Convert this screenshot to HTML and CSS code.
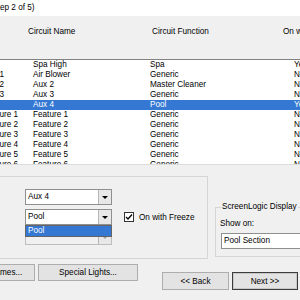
FILE: index.html
```html
<!DOCTYPE html>
<html>
<head>
<meta charset="utf-8">
<link rel="stylesheet" href="styles.css">
</head>
<body>
<div class="page">
  <div class="title"><span class="title-text">(Step 2 of 5)</span></div>
  <div class="colhead">
    <span class="h h-name">Circuit Name</span>
    <span class="h h-func">Circuit Function</span>
    <span class="h h-freeze">On with Freeze</span>
  </div>
  <div class="list">
    <div class="row"><span>Spa</span><span>Spa High</span><span>Spa</span><span>Yes</span></div>
    <div class="row"><span>Aux 1</span><span>Air Blower</span><span>Generic</span><span>No</span></div>
    <div class="row"><span>Aux 2</span><span>Aux 2</span><span>Master Cleaner</span><span>No</span></div>
    <div class="row"><span>Aux 3</span><span>Aux 3</span><span>Generic</span><span>No</span></div>
    <div class="row selected"><span></span><span>Aux 4</span><span>Pool</span><span>Yes</span></div>
    <div class="row"><span>Feature 1</span><span>Feature 1</span><span>Generic</span><span>No</span></div>
    <div class="row"><span>Feature 2</span><span>Feature 2</span><span>Generic</span><span>No</span></div>
    <div class="row"><span>Feature 3</span><span>Feature 3</span><span>Generic</span><span>No</span></div>
    <div class="row"><span>Feature 4</span><span>Feature 4</span><span>Generic</span><span>No</span></div>
    <div class="row"><span>Feature 5</span><span>Feature 5</span><span>Generic</span><span>No</span></div>
    <div class="row"><span>Feature 6</span><span>Feature 6</span><span>Generic</span><span>No</span></div>
  </div>
  <div class="lower">
    <div class="group-left">
      <div class="combo"><span class="combo-text">Aux 4</span><span class="combo-btn"><i class="tri"></i></span></div>
      <div class="combo-row">
        <div class="combo-wrap">
          <div class="combo"><span class="combo-text">Pool</span><span class="combo-btn"><i class="tri"></i></span></div>
          <div class="droplist"><div class="drop-item">Pool</div></div>
        </div>
        <span class="check"><svg width="8" height="8" viewBox="0 0 8 8"><path d="M1 4 L3 6 L7 1.5" fill="none" stroke="#000" stroke-width="1.3"/></svg></span>
        <span class="check-label">On with Freeze</span>
      </div>
      <div class="combo disabled"><span class="combo-text"></span><span class="combo-btn"><i class="tri"></i></span></div>
    </div>
    <fieldset class="group-right">
      <legend>ScreenLogic Display</legend>
      <div class="showon">Show on:</div>
      <div class="combo wide"><span class="combo-text">Pool Section</span><span class="combo-btn"><i class="tri"></i></span></div>
    </fieldset>
  </div>
  <div class="buttons">
    <button class="btn btn-names">Edit Circuit Names...</button>
    <button class="btn btn-special">Special Lights...</button>
    <button class="btn btn-back">&lt;&lt; Back</button>
    <button class="btn btn-next">Next &gt;&gt;</button>
  </div>
</div>
</body>
</html>
```
FILE: styles.css
```css
* { box-sizing: border-box; }
html, body { margin: 0; padding: 0; }
body {
  font-family: "Liberation Sans", Arial, sans-serif;
  font-size: 8.2px;
  color: #000;
  background: #f0f0f0;
}
.page {
  width: 300px;
  height: 300px;
  overflow: hidden;
  display: flex;
  flex-direction: column;
}
.title {
  height: 16px;
  flex: none;
  background: #fff;
  line-height: 15px;
  white-space: nowrap;
}
.title-text { display: inline-block; margin-left: -10.5px; }
.colhead {
  height: 44px;
  flex: none;
  background: #f0f0f0;
  border-bottom: 1px solid #828282;
  display: flex;
  padding: 11px 0 0 28px;
  line-height: 10px;
  white-space: nowrap;
}
.h-name { width: 124px; flex: none; }
.h-func { width: 131px; flex: none; }
.list {
  flex: none;
  margin-left: -20px;
  width: 340px;
  height: 105px;
  background: #fff;
  border-bottom: 1px solid #dcdcdc;
  overflow: hidden;
}
.row {
  display: grid;
  grid-template-columns: 50px 117px 144px 1fr;
  height: 10px;
  line-height: 10px;
  white-space: nowrap;
}
.row span { padding-left: 3px; overflow: hidden; }
.row.selected { background: #3478d4; color: #fff; }

.lower {
  flex: none;
  display: flex;
  align-items: flex-start;
  margin-top: 11px;
  margin-left: -10px;
}
.group-left {
  flex: none;
  width: 218px;
  height: 83px;
  border: 1px solid #d5d5d5;
  padding: 12px 0 0 34px;
}
.combo {
  width: 87px;
  height: 16px;
  border: 1px solid #8f8f8f;
  background: #fff;
  display: flex;
  align-items: stretch;
  line-height: 14px;
}
.combo-text { flex: 1; padding-left: 2px; white-space: nowrap; overflow: hidden; }
.combo-btn {
  width: 13px;
  flex: none;
  background: #e8e8e8;
  border-left: 1px solid #b5b5b5;
  display: flex;
  align-items: center;
  justify-content: center;
}
.tri {
  width: 0; height: 0;
  border-left: 3px solid transparent;
  border-right: 3px solid transparent;
  border-top: 3px solid #000;
}
.combo.disabled { background: #f0f0f0; border-color: #bdbdbd; margin-top: 4px; }
.combo.disabled .tri { border-top-color: #a0a0a0; }
.combo-row {
  display: flex;
  align-items: center;
  margin-top: 4px;
}
.combo-wrap { position: relative; flex: none; }
.droplist {
  position: absolute;
  left: 0;
  top: 16px;
  width: 87px;
  height: 12px;
  border: 1px solid #646464;
  background: #fff;
  z-index: 2;
}
.drop-item {
  background: #3478d4;
  color: #fff;
  height: 10px;
  line-height: 10px;
  padding-left: 2px;
}
.check {
  width: 10px;
  height: 10px;
  margin-left: 12px;
  border: 1px solid #333;
  background: #fff;
  display: flex;
  align-items: center;
  justify-content: center;
  flex: none;
}
.check-label { margin-left: 5px; white-space: nowrap; }

.group-right {
  flex: none;
  margin: 26px 0 0 7px;
  width: 100px;
  border: 1px solid #d5d5d5;
  padding: 0 5px 7px 5px;
  min-width: 0;
}
.group-right legend {
  padding: 0 1px;
  line-height: 10px;
  white-space: nowrap;
}
.showon { margin: 7px 0 0 -1px; line-height: 10px; }
.combo.wide { width: 120px; margin-top: 4px; }

.buttons {
  flex: none;
  display: flex;
  align-items: flex-start;
  margin-left: -65px;
}
.btn {
  font: inherit;
  color: #000;
  background: #e3e3e3;
  border: 1px solid #adadad;
  border-radius: 0;
  padding: 0;
  white-space: nowrap;
  flex: none;
}
.btn-names { width: 100px; height: 17px; margin-top: 5px; }
.btn-special { width: 100px; height: 17px; margin-top: 5px; margin-left: 3px; }
.btn-back { width: 67px; height: 18px; margin-top: 13px; margin-left: 24px; }
.btn-next {
  width: 66px; height: 18px; margin-top: 13px; margin-left: 3px;
  border-color: #3c3c3c;
  box-shadow: inset 0 0 0 1px #c8c8c8;
}
```
